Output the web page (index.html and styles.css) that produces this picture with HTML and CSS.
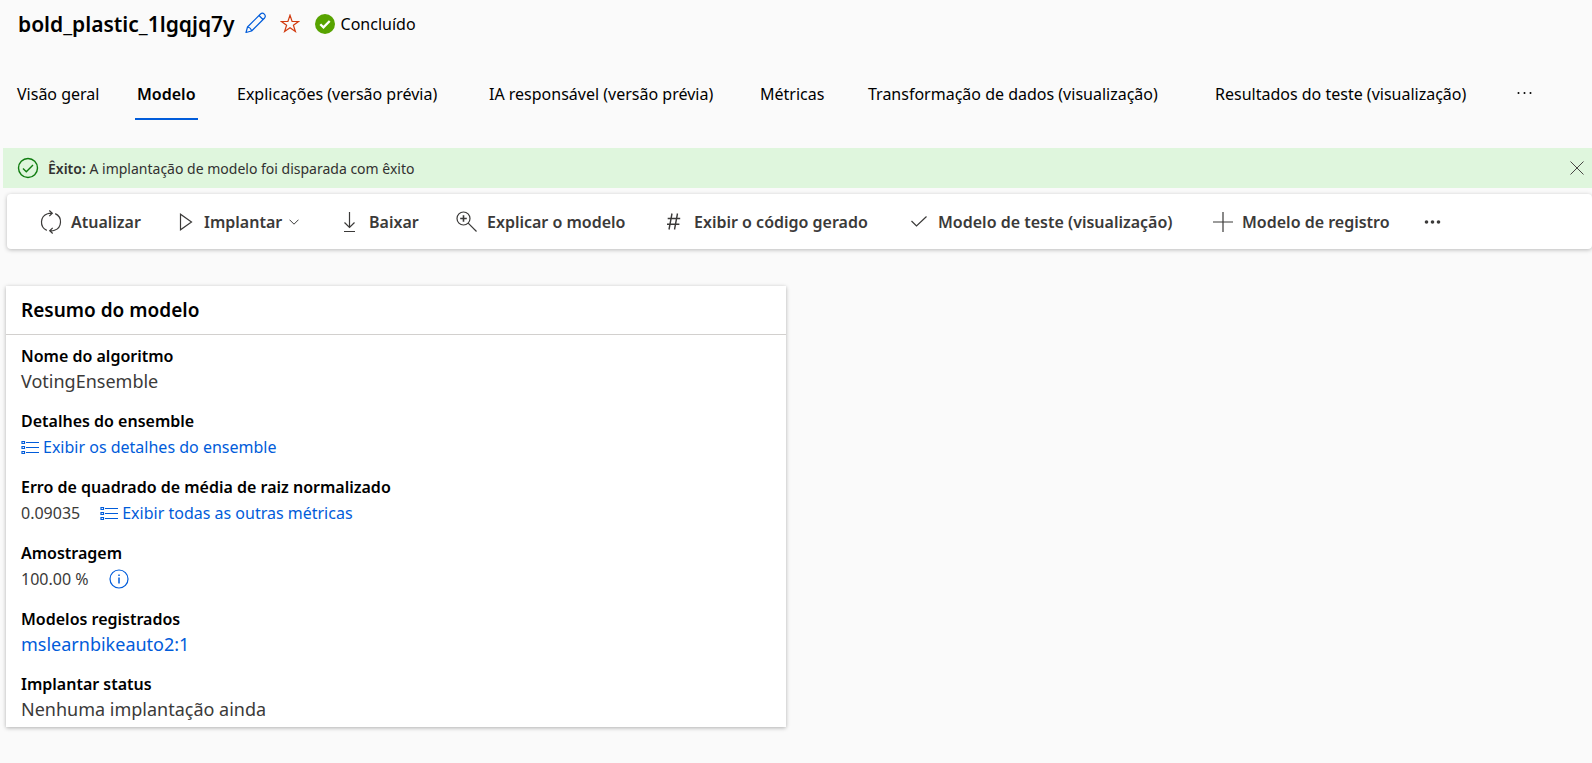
FILE: index.html
```html
<!DOCTYPE html>
<html lang="pt-BR">
<head>
<meta charset="utf-8">
<meta name="viewport" content="width=device-width, initial-scale=1">
<title>bold_plastic_1lgqjq7y</title>
<link rel="stylesheet" href="styles.css">
</head>
<body>
<header class="page-header">
  <h1 class="page-title">bold_plastic_1lgqjq7y</h1>
  <button class="icon-button edit" type="button" aria-label="Editar nome">
    <svg width="22" height="22" viewBox="0 0 22 22" fill="none" stroke="currentColor" stroke-width="1.200"><path d="M1 20.500 2.500 15 15.500 2Q17.500 .3 19.300 2.200T19.600 6L6.600 19Z M2.500 15Q5.800 15.500 6.600 19 M14 3.500 18 7.500" stroke-linejoin="round"/></svg>
  </button>
  <button class="icon-button star" type="button" aria-label="Favorito">
    <svg width="20" height="20" viewBox="0 0 20 20" fill="none" stroke="currentColor" stroke-width="1.200"><path d="M10 1.200 12.100 7.500H18.500L13.400 11.300 15.400 17.500 10 13.700 4.600 17.500 6.600 11.300 1.500 7.500H7.900Z"/></svg>
  </button>
  <div class="status">
    <svg width="20" height="20" viewBox="0 0 20 20"><circle cx="10" cy="10" r="10" fill="#57a300"/><path d="m5.300 10.200 3.200 3.200 6.200-6.400" fill="none" stroke="#fff" stroke-width="2.300"/></svg>
    <span>Concluído</span>
  </div>
</header>

<nav class="tabs" role="tablist">
  <button class="tab" type="button" role="tab">Visão geral</button>
  <button class="tab tab-active" type="button" role="tab" aria-selected="true">Modelo</button>
  <button class="tab" type="button" role="tab">Explicações (versão prévia)</button>
  <button class="tab" type="button" role="tab">IA responsável (versão prévia)</button>
  <button class="tab" type="button" role="tab">Métricas</button>
  <button class="tab" type="button" role="tab">Transformação de dados (visualização)</button>
  <button class="tab" type="button" role="tab">Resultados do teste (visualização)</button>
  <button class="tab" type="button" aria-label="Mais guias">
    <svg width="16" height="4" viewBox="0 0 16 4" fill="currentColor"><circle cx="1.500" cy="1" r="1"/><circle cx="7.500" cy="1" r="1"/><circle cx="13.500" cy="1" r="1"/></svg>
  </button>
</nav>

<div class="message" role="status">
  <svg width="22" height="22" viewBox="0 0 22 22" fill="none" stroke="#107c10" stroke-width="1.400"><circle cx="11" cy="11" r="9.500"/><path d="m6 11.500 3.300 3.300 6.700-6.800"/></svg>
  <p class="message-text"><strong>Êxito:</strong> A implantação de modelo foi disparada com êxito</p>
  <button class="icon-button close" type="button" aria-label="Fechar">
    <svg width="14" height="14" viewBox="0 0 14 14" fill="none" stroke="currentColor" stroke-width="1"><path d="m.5.500 13 13M13.500.500.500 13.500"/></svg>
  </button>
</div>

<div class="toolbar" role="toolbar">
  <button class="command" type="button">
    <svg width="22" height="24" viewBox="0 0 22 24" fill="none" stroke="currentColor" stroke-width="1.200"><path d="M6.800 20.400A9 9 0 0 1 7.500 3.700Q9.500 2.900 12.500 3.200M9.300 .5 12.300 3.200 9.300 6.200M15.200 3.600A9 9 0 0 1 14.500 20.300Q12.500 21.100 9.500 20.800M12.700 17.800 9.700 20.800 12.700 23.500"/></svg>
    <span>Atualizar</span>
  </button>
  <button class="command" type="button">
    <svg width="16" height="18" viewBox="0 0 16 18" fill="none" stroke="currentColor" stroke-width="1.200"><path d="M1.500 1.200V16.800L12.500 9Z"/></svg>
    <span class="with-chevron">Implantar
      <svg width="10" height="6" viewBox="0 0 10 6" fill="none" stroke="currentColor"><path d="m.5.700 4.500 4.500 4.500-4.500"/></svg></span>
  </button>
  <button class="command" type="button">
    <svg width="18" height="22" viewBox="0 0 18 22" fill="none" stroke="currentColor" stroke-width="1.200"><path d="M7.500 1V16.500M2.500 11.500 7.500 16.500 12.500 11.500M2 20.500H13"/></svg>
    <span>Baixar</span>
  </button>
  <button class="command" type="button">
    <svg width="22" height="22" viewBox="0 0 22 22" fill="none" stroke="currentColor" stroke-width="1.200"><circle cx="7.500" cy="7.500" r="6.500"/><path d="M12.200 12.200 20.500 20.500"/><path d="M7.500 4.200V10.800M4.200 7.500H10.800" stroke-width="1.600"/></svg>
    <span>Explicar o modelo</span>
  </button>
  <button class="command" type="button">
    <svg width="18" height="18" viewBox="0 0 18 18" fill="none" stroke="currentColor" stroke-width="1.400"><path d="M5 .500 2 16.500M10.500.500 7.500 16.500M.700 5.500H13.200M0 11.200H12.400"/></svg>
    <span>Exibir o código gerado</span>
  </button>
  <button class="command" type="button">
    <svg width="18" height="12" viewBox="0 0 18 12" fill="none" stroke="currentColor" stroke-width="1.200"><path d="M.500 5 5.500 10 15.500.500"/></svg>
    <span>Modelo de teste (visualização)</span>
  </button>
  <button class="command" type="button">
    <svg width="20" height="20" viewBox="0 0 20 20" fill="none" stroke="currentColor" stroke-width="1.200"><path d="M10 0V20M0 10H20"/></svg>
    <span>Modelo de registro</span>
  </button>
  <button class="command" type="button" aria-label="Mais comandos">
    <svg width="18" height="4" viewBox="0 0 18 4" fill="currentColor"><circle cx="2.500" cy="2" r="1.800"/><circle cx="8.500" cy="2" r="1.800"/><circle cx="14.500" cy="2" r="1.800"/></svg>
  </button>
</div>

<section class="card">
  <h2 class="card-title">Resumo do modelo</h2>
  <dl class="details">
    <div class="detail">
      <dt>Nome do algoritmo</dt>
      <dd class="large">VotingEnsemble</dd>
    </div>
    <div class="detail">
      <dt>Detalhes do ensemble</dt>
      <dd class="with-icon"><a class="link" href="#ensemble"><svg width="18" height="14" viewBox="0 0 18 14" fill="none" stroke="currentColor" stroke-width="1.200"><path d="M1 1.500H3.500V3.500H1ZM1 6.500H3.500V8.500H1ZM1 11.500H3.500V13.500H1ZM5 2.500H18M5 7.500H18M5 12.500H18"/></svg>Exibir os detalhes do ensemble</a></dd>
    </div>
    <div class="detail">
      <dt>Erro de quadrado de média de raiz normalizado</dt>
      <dd class="with-icon"><span>0.09035</span><a class="link" href="#metricas"><svg width="18" height="14" viewBox="0 0 18 14" fill="none" stroke="currentColor" stroke-width="1.200"><path d="M1 1.500H3.500V3.500H1ZM1 6.500H3.500V8.500H1ZM1 11.500H3.500V13.500H1ZM5 2.500H18M5 7.500H18M5 12.500H18"/></svg>Exibir todas as outras métricas</a></dd>
    </div>
    <div class="detail">
      <dt>Amostragem</dt>
      <dd class="with-icon"><span>100.00 %</span><button class="icon-button info" type="button" aria-label="Informações"><svg width="20" height="20" viewBox="0 0 20 20" fill="none" stroke="currentColor" stroke-width="1.200"><circle cx="10" cy="10" r="9"/><path d="M10 8.500V14.500M10 5.500V7" stroke-width="1.500"/></svg></button></dd>
    </div>
    <div class="detail">
      <dt>Modelos registrados</dt>
      <dd class="large"><a class="link" href="#modelo">mslearnbikeauto2:1</a></dd>
    </div>
    <div class="detail">
      <dt>Implantar status</dt>
      <dd class="large">Nenhuma implantação ainda</dd>
    </div>
  </dl>
</section>
</body>
</html>
```
FILE: styles.css
```css
* {
  box-sizing: border-box;
}

body {
  min-height: 100vh;
  margin: 0;
  background: #fafafa;
  color: #000;
  font-family: "Noto Sans", "Open Sans", sans-serif;
  font-size: 16px;
}

h1,
h2,
p,
dl,
dd {
  margin: 0;
}

button {
  padding: 0;
  border: 0;
  background: none;
  color: inherit;
  font: inherit;
  cursor: pointer;
}

svg {
  flex: none;
  display: block;
}

.page-header {
  display: flex;
  align-items: center;
  padding: 8px 18px 0;
  line-height: 32px;
}

.page-title {
  font-size: 21px;
  font-weight: 600;
}

.edit {
  margin-left: 10px;
  padding-bottom: 3px;
  color: #015cda;
}

.star {
  margin-left: 13px;
  color: #d13b10;
}

.status {
  display: flex;
  align-items: center;
  gap: 6px;
  margin-left: 15px;
}

.tabs {
  display: grid;
  grid-template-columns: 120px 100px 252px 271px 108px 347px 302px auto;
  justify-content: start;
  margin-top: 36px;
  padding-left: 17px;
}

.tab {
  justify-self: start;
  padding-bottom: 6px;
  border-bottom: 2px solid transparent;
  line-height: 36px;
  white-space: nowrap;
}

.tab-active {
  margin-left: -2px;
  padding-right: 2px;
  padding-left: 2px;
  border-color: #015cda;
  font-weight: 600;
}

.message {
  display: flex;
  align-items: center;
  gap: 9px;
  height: 40px;
  margin: 28px 0 0 3px;
  padding: 0 8px 0 14px;
  background: #dff6dd;
  color: #323130;
  font-size: 14px;
}

.message-text {
  flex: 1;
}

.message strong {
  font-weight: 600;
}

.close {
  color: #484644;
}

.toolbar {
  display: grid;
  grid-template-columns: 139px 163px 114px 211px 244px 302px 211px auto;
  justify-content: start;
  align-items: center;
  height: 55px;
  margin: 6px 0 0 7px;
  padding-left: 33px;
  border-radius: 4px;
  background: #fff;
  box-shadow: 0 1px 4px rgba(0, 0, 0, 0.26);
  color: #3b3a39;
  font-weight: 600;
}

.command {
  display: flex;
  align-items: center;
  gap: 9px;
  white-space: nowrap;
}

.with-chevron {
  display: flex;
  align-items: center;
  gap: 7px;
}

.card {
  width: 49%;
  margin: 37px 0 0 6px;
  background: #fff;
  box-shadow: 0 1px 4px rgba(0, 0, 0, 0.3);
}

.card-title {
  padding: 1px 0 0 15px;
  border-bottom: 1px solid #d2d0ce;
  font-size: 19px;
  font-weight: 600;
  line-height: 47px;
}

.details {
  display: grid;
  gap: 14px;
  padding: 8px 15px 5px;
  line-height: 26px;
}

.detail dt {
  font-weight: 600;
}

.detail dd {
  color: #3b3a39;
}

.detail .large {
  font-size: 18px;
  line-height: 25px;
}

.with-icon {
  display: flex;
  align-items: center;
  gap: 20px;
}

.link {
  display: inline-flex;
  align-items: center;
  gap: 4px;
  color: #015cda;
  text-decoration: none;
}

.info {
  color: #015cda;
}
```
